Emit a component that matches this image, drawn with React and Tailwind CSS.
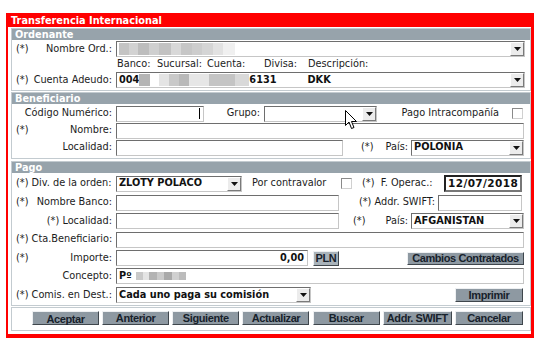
import React from 'react'

const Arrow = () => (
  <div className="ml-auto w-[14px] h-full bg-[#ececec] border border-t-white border-l-white border-b-[#7a7a7a] border-r-[#7a7a7a] flex items-center justify-center shrink-0">
    <svg width="7" height="4" viewBox="0 0 7 4"><polygon points="0,0 7,0 3.5,4" fill="#111" /></svg>
  </div>
)

function Field({ className = '', children }) {
  return (
    <div className={`h-[16px] bg-white border border-t-[#6e6e6e] border-l-[#6e6e6e] border-b-[#c6c6c6] border-r-[#c6c6c6] flex items-center shrink-0 overflow-hidden ${className}`}>
      {children}
    </div>
  )
}

function Select({ className = '', children }) {
  return (
    <Field className={className}>
      <div className="pl-[2px] flex items-center font-bold text-[#111] whitespace-pre">{children}</div>
      <Arrow />
    </Field>
  )
}

function Check() {
  return <div className="w-[11px] h-[11px] bg-white border border-t-[#8a8a8a] border-l-[#8a8a8a] border-b-[#d0d0d0] border-r-[#d0d0d0] shrink-0" />
}

function Btn({ className = '', children }) {
  return (
    <div className={`bg-[#8e99a2] border border-t-[#eef0f2] border-l-[#eef0f2] border-b-[#3f464c] border-r-[#3f464c] font-['Liberation_Sans',Arial,sans-serif] font-bold text-[11px] tracking-[-0.4px] text-[#17212b] flex items-center justify-center leading-none shrink-0 ${className}`}>
      {children}
    </div>
  )
}

function Label({ star, children }) {
  return (
    <div className="w-[104px] pl-[4px] pr-[4px] flex justify-between items-center whitespace-pre shrink-0">
      <span>{star ? '(*)' : ''}</span>
      <span>{children}</span>
    </div>
  )
}

function Header({ children }) {
  return <div className="h-[11px] bg-[#97a3ab] text-white font-bold leading-[11px] pl-[3px]">{children}</div>
}

function Blur({ items, h = 'h-[12px]' }) {
  return (
    <div className="flex items-center">
      {items.map((c, i) => (
        <div key={i} className={h} style={{ width: c[0], background: c[1] }} />
      ))}
    </div>
  )
}

export default function App() {
  return (
    <div className="relative w-[543px] h-[352px] bg-white font-['DejaVu_Sans',sans-serif] text-[9.75px] text-[#1c1c1c] pt-[13px] pl-[6px]">
      <div className="w-[528px] bg-[#ff0000] pt-[2px] pl-[2px] pr-[3px] pb-[4px]">
        <div className="h-[12px] text-white font-bold leading-[12px] pl-[3px]">Transferencia Internacional</div>
        <div className="bg-white pl-[3px] pt-[1px] pb-[3px] flex flex-col">
          {/* Ordenante */}
          <div className="border border-[#c3cbd0]">
            <Header>Ordenante</Header>
            <div className="pb-[1px]">
              <div className="h-[18px] flex items-center">
                <Label star>Nombre Ord.:</Label>
                <Field className="w-[409px]">
                  <div className="pl-[2px]">
                    <Blur items={[[10, '#c4c4c4'], [9, '#d2d2d2'], [11, '#bdbdbd'], [10, '#cfcfcf'], [12, '#c2c2c2'], [10, '#d8d8d8'], [11, '#c6c6c6'], [10, '#cdcdcd'], [11, '#d5d5d5'], [10, '#e2e2e2'], [12, '#f0f0f0']]} />
                  </div>
                  <Arrow />
                </Field>
              </div>
              <div className="h-[13px] flex items-center">
                <div className="w-[105px]" />
                <span className="w-[40px]">Banco:</span>
                <span className="w-[50px]">Sucursal:</span>
                <span className="w-[57px]">Cuenta:</span>
                <span className="w-[44px]">Divisa:</span>
                <span>Descripción:</span>
              </div>
              <div className="h-[18px] flex items-center">
                <Label star>Cuenta Adeudo:</Label>
                <Field className="w-[409px]">
                  <div className="pl-[2px] flex items-center font-bold text-[#111]">
                    <span>004</span>
                    <Blur items={[[11, '#b5b5b5'], [9, '#ffffff'], [10, '#e4e4e4'], [10, '#c9c9c9'], [10, '#b9b9b9'], [20, '#e6e6e6'], [26, '#c4c4c4'], [14, '#d9d9d9']]} />
                    <span>6131</span>
                    <span className="ml-[31px]">DKK</span>
                  </div>
                  <Arrow />
                </Field>
              </div>
            </div>
          </div>

          {/* Beneficiario */}
          <div className="border border-[#c3cbd0] mt-[1px]">
            <Header>Beneficiario</Header>
            <div className="pt-[1px] pb-[2px]">
              <div className="h-[17px] flex items-center">
                <Label>Código Numérico:</Label>
                <Field className="w-[88px] justify-end">
                  <div className="w-[1px] h-[11px] bg-black mr-[3px]" />
                </Field>
                <div className="w-[60px] text-right pr-[4px]">Grupo:</div>
                <Field className="w-[113px]">
                  <Arrow />
                </Field>
                <div className="w-[122px] text-right">Pago Intracompañía</div>
                <div className="ml-[13px]"><Check /></div>
              </div>
              <div className="h-[17px] flex items-center">
                <Label star>Nombre:</Label>
                <Field className="w-[408px]" />
              </div>
              <div className="h-[17px] flex items-center">
                <Label>Localidad:</Label>
                <Field className="w-[227px]" />
                <div className="w-[68px] pl-[18px] pr-[3px] flex justify-between">
                  <span>(*)</span>
                  <span>País:</span>
                </div>
                <Select className="w-[113px]">POLONIA</Select>
              </div>
            </div>
          </div>

          {/* Pago */}
          <div className="border border-[#c3cbd0] mt-[2px]">
            <Header>Pago</Header>
            <div className="pt-[1px]">
              <div className="h-[19px] flex items-center">
                <div className="w-[104px] pl-[4px] shrink-0">(*) Div. de la orden:</div>
                <Select className="w-[126px]">ZLOTY POLACO</Select>
                <div className="w-[99px] pl-[10px]">Por contravalor</div>
                <Check />
                <div className="w-[92px] pl-[10px] whitespace-pre">(*)  F. Operac.:</div>
                <div className="w-[78px] h-[17px] bg-white border-2 border-t-[#222] border-l-[#222] border-b-[#777] border-r-[#777] font-bold text-[10.5px] text-[#111] flex items-center pl-[2px] tracking-[0.4px]">12/07/2018</div>
              </div>
              <div className="h-[19px] flex items-center">
                <Label star>Nombre Banco:</Label>
                <Field className="w-[223px]" />
                <div className="w-[99px] text-right pr-[3px]">(*) Addr. SWIFT:</div>
                <Field className="w-[84px]" />
              </div>
              <div className="h-[18px] flex items-center">
                <div className="w-[104px] pr-[4px] text-right shrink-0">(*) Localidad:</div>
                <Field className="w-[223px]" />
                <div className="w-[72px] pl-[14px] pr-[3px] flex justify-between">
                  <span>(*)</span>
                  <span>País:</span>
                </div>
                <Select className="w-[113px]">AFGANISTAN</Select>
              </div>
              <div className="h-[19px] flex items-center">
                <div className="w-[104px] pl-[4px] shrink-0">(*) Cta.Beneficiario:</div>
                <Field className="w-[408px]" />
              </div>
              <div className="h-[18px] flex items-center">
                <Label star>Importe:</Label>
                <Field className="w-[192px] justify-end pr-[3px] font-bold text-[#111]">0,00</Field>
                <Btn className="ml-[5px] w-[26px] h-[15px] items-start pt-[1px] bg-[#a9b3ba]">PLN</Btn>
                <Btn className="ml-auto mr-[6px] w-[117px] h-[13px]">Cambios Contratados</Btn>
              </div>
              <div className="h-[18px] flex items-center">
                <Label>Concepto:</Label>
                <Field className="w-[408px] font-bold text-[#111]">
                  <span className="pl-[2px] pr-[4px]">Pº</span>
                  <Blur h="h-[8px]" items={[[7, '#c9c9c9'], [6, '#e4e4e4'], [8, '#b3b3b3'], [7, '#cacaca'], [8, '#a9a9a9'], [7, '#d0d0d0'], [7, '#bcbcbc']]} />
                </Field>
              </div>
              <div className="h-[20px] flex items-center">
                <div className="w-[104px] pl-[4px] shrink-0">(*) Comis. en Dest.:</div>
                <Select className="w-[195px]">Cada uno paga su comisión</Select>
                <Btn className="ml-auto mr-[7px] w-[68px] h-[14px]">Imprimir</Btn>
              </div>
            </div>
          </div>

          {/* Botones */}
          <div className="border border-[#c3cbd0] mt-[1px] pt-[3px] pb-[5px]">
            <div className="ml-[20px] w-[491px] flex justify-between">
              <Btn className="w-[67px] h-[14px] pt-[2px]">Aceptar</Btn>
              <Btn className="w-[67px] h-[14px]">Anterior</Btn>
              <Btn className="w-[67px] h-[14px]">Siguiente</Btn>
              <Btn className="w-[67px] h-[14px]">Actualizar</Btn>
              <Btn className="w-[67px] h-[14px]">Buscar</Btn>
              <Btn className="w-[69px] h-[14px]">Addr. SWIFT</Btn>
              <Btn className="w-[68px] h-[14px]">Cancelar</Btn>
            </div>
          </div>
        </div>
      </div>

      {/* puntero del ratón */}
      <svg className="absolute left-[345px] top-[110px]" width="13" height="20" viewBox="0 0 13 20">
        <path d="M0.5 0.5 L0.5 15.5 L4 12 L6.5 18.5 L9 17.5 L6.5 11.5 L11.5 11.5 Z" fill="#fff" stroke="#000" strokeWidth="1" strokeLinejoin="round" />
      </svg>
    </div>
  )
}
